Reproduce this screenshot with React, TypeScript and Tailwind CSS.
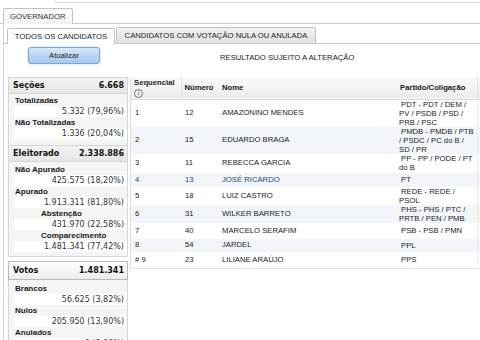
import React from 'react';

type Stat = { label: string; value: string; indent?: boolean };

const secoes: Stat[] = [
    { label: 'Totalizadas', value: '5.332 (79,96%)' },
    { label: 'Não Totalizadas', value: '1.336 (20,04%)' },
];

const eleitorado: Stat[] = [
    { label: 'Não Apurado', value: '425.575 (18,20%)' },
    { label: 'Apurado', value: '1.913.311 (81,80%)' },
    { label: 'Abstenção', value: '431.970 (22,58%)', indent: true },
    { label: 'Comparecimento', value: '1.481.341 (77,42%)', indent: true },
];

const votos: Stat[] = [
    { label: 'Brancos', value: '56.625 (3,82%)' },
    { label: 'Nulos', value: '205.950 (13,90%)' },
    { label: 'Anulados', value: '0 (0,00%)' },
];

const candidatos = [
    { seq: '1', num: '12', nome: 'AMAZONINO MENDES', partido: ['PDT - PDT / DEM /', 'PV / PSDB / PSD /', 'PRB / PSC'], h: 'h-[25px]' },
    { seq: '2', num: '15', nome: 'EDUARDO BRAGA', partido: ['PMDB - PMDB / PTB', '/ PSDC / PC do B /', 'SD / PR'], h: 'h-[27px]' },
    { seq: '3', num: '11', nome: 'REBECCA GARCIA', partido: ['PP - PP / PODE / PT', 'do B'], h: 'h-[19px]' },
    { seq: '4', num: '13', nome: 'JOSÉ RICARDO', partido: ['PT'], h: 'h-[14px]', blue: true },
    { seq: '5', num: '18', nome: 'LUIZ CASTRO', partido: ['REDE - REDE /', 'PSOL'], h: 'h-[18px]' },
    { seq: '6', num: '31', nome: 'WILKER BARRETO', partido: ['PHS - PHS / PTC /', 'PRTB / PEN / PMB'], h: 'h-[18px]' },
    { seq: '7', num: '40', nome: 'MARCELO SERAFIM', partido: ['PSB - PSB / PMN'], h: 'h-[16px]' },
    { seq: '8', num: '54', nome: 'JARDEL', partido: ['PPL'], h: 'h-[13px]' },
    { seq: '# 9', num: '23', nome: 'LILIANE ARAÚJO', partido: ['PPS'], h: 'h-[17px]' },
];

const StatRows = ({ items }: { items: Stat[] }) => (
    <div>
        {items.map((s) => (
            <div key={s.label}>
                <div
                    className={`h-[11px] leading-[11px] text-[8px] font-bold text-[#1a1a1a] ${s.indent ? 'pl-[32px]' : 'pl-[6px]'}`}
                >
                    {s.label}
                </div>
                <div className="h-[11px] leading-[12px] ml-[5px] bg-white pr-[3px] text-right text-[8px] text-[#333] font-['DejaVu_Sans',sans-serif]">
                    {s.value}
                </div>
            </div>
        ))}
    </div>
);

const PanelHeader = ({ label, value }: { label: string; value: string }) => (
    <div className="h-[16px] flex items-center justify-between pl-[4px] pr-[3px] bg-gradient-to-b from-[#f4f4f4] to-[#e6e6e6] border-b border-[#d6d6d6] text-[8px] font-bold text-[#111] font-['DejaVu_Sans',sans-serif]">
        <span>{label}</span>
        <span>{value}</span>
    </div>
);

export default function App() {
    return (
        <div className="w-[480px] h-[340px] overflow-hidden bg-white text-[#222] font-['Liberation_Sans',Arial,sans-serif]">
            {/* top frame edge */}
            <div className="ml-[55px] h-[3px] border-l border-b border-[#dcdcdc]" />

            {/* cargo tab */}
            <div className="h-[21px] flex items-end pl-[3px] border-b border-[#c9c9c9]">
                <div className="h-[16px] -mb-px px-[6px] flex items-center bg-gradient-to-b from-white to-[#f3f3f3] border border-b-0 border-[#c4c4c4] rounded-t-[3px] text-[7.7px] text-[#333]">
                    GOVERNADOR
                </div>
            </div>

            <div className="ml-[3px] border-l border-[#d2d2d2] h-full">
                {/* candidate tabs */}
                <div className="h-[20px] flex items-end pl-[3px] border-b border-[#c9c9c9]">
                    <div className="h-[16px] w-[108px] -mb-px flex items-center justify-center bg-white border border-b-0 border-[#c4c4c4] rounded-t-[2px] text-[7.7px] text-[#222]">
                        TODOS OS CANDIDATOS
                    </div>
                    <div className="h-[16px] w-[200px] ml-px flex items-center justify-center bg-gradient-to-b from-[#f2f2f2] to-[#e2e2e2] border border-b-0 border-[#c4c4c4] rounded-t-[2px] text-[7.7px] text-[#222]">
                        CANDIDATOS COM VOTAÇÃO NULA OU ANULADA
                    </div>
                </div>

                {/* actions */}
                <div className="h-[33px] flex items-start pt-[3px]">
                    <button className="ml-[24px] w-[72px] h-[17px] rounded-[3px] border border-[#7ea6d3] bg-gradient-to-b from-[#dbeafb] via-[#bcd6f2] to-[#a6c8ee] text-[7.7px] text-[#222] shadow-[0_0_2px_rgba(90,150,220,0.6)]">
                        Atualizar
                    </button>
                    <div className="ml-[120px] mt-[5px] text-[7.7px] text-[#222]">RESULTADO SUJEITO A ALTERAÇÃO</div>
                </div>

                <div className="flex items-start">
                    {/* resumo */}
                    <div className="ml-[4px] w-[120px] shrink-0">
                        <div className="border border-[#d6d6d6] bg-[#f5f5f5] pb-[4px]">
                            <PanelHeader label="Seções" value="6.668" />
                            <div className="pt-px">
                                <StatRows items={secoes} />
                            </div>
                            <div className="h-[6px]" />
                            <div className="border-t border-[#d6d6d6]">
                                <PanelHeader label="Eleitorado" value="2.338.886" />
                            </div>
                            <div className="pt-[2px]">
                                <StatRows items={eleitorado} />
                            </div>
                        </div>
                        <div className="mt-[4px] border border-[#b9b9b9] bg-[#f5f5f5]">
                            <div className="h-[17px] flex items-center justify-between pl-[4px] pr-[3px] bg-gradient-to-b from-white to-[#ededed] text-[8px] font-bold text-[#111] font-['DejaVu_Sans',sans-serif]">
                                <span>Votos</span>
                                <span>1.481.341</span>
                            </div>
                        </div>
                        <div className="border-x border-[#d6d6d6] bg-[#f5f5f5] pt-[3px]">
                            <StatRows items={votos} />
                        </div>
                    </div>

                    {/* candidatos */}
                    <div className="ml-[2px] flex-1 border-l border-[#dcdcdc]">
                        <table className="w-full table-fixed border-collapse text-[7.7px]">
                            <colgroup>
                                <col className="w-[50px]" />
                                <col className="w-[38px]" />
                                <col className="w-[178px]" />
                                <col className="w-[80px]" />
                                <col />
                            </colgroup>
                            <thead>
                                <tr className="h-[22px] bg-gradient-to-b from-[#fafafa] to-[#ececec] border-b border-[#d8d8d8] font-bold text-[#222]">
                                    <th className="pl-[3px] text-left align-top pt-[1px] border-r border-[#e2e2e2] font-bold">
                                        <div className="leading-[9px]">Sequencial</div>
                                        <div className="mt-[2px] w-[9px] h-[9px] rounded-full border border-[#777] flex items-center justify-center text-[6.5px] leading-none font-normal text-[#555] font-['DejaVu_Serif',serif]">
                                            i
                                        </div>
                                    </th>
                                    <th className="pl-[3px] text-left align-middle pt-[1px] font-bold">Número</th>
                                    <th className="pl-[3px] text-left align-middle pt-[1px] font-bold">Nome</th>
                                    <th className="pl-[3px] text-left align-middle pt-[1px] border-r border-[#e2e2e2] font-bold">Partido/Coligação</th>
                                    <th />
                                </tr>
                            </thead>
                            <tbody>
                                {candidatos.map((c, i) => (
                                    <tr
                                        key={c.seq}
                                        className={`${c.h} ${i % 2 === 1 ? 'bg-[#f3f5f9]' : 'bg-white'} ${c.blue ? 'text-[#27468a]' : 'text-[#222]'} ${i === candidatos.length - 1 ? 'border-b border-[#e4e4e4]' : ''}`}
                                    >
                                        <td className="pl-[4px] align-middle">{c.seq}</td>
                                        <td className="pl-[4px] align-middle">{c.num}</td>
                                        <td className="pl-[3px] align-middle">{c.nome}</td>
                                        <td className="pl-[2px] align-middle leading-[9px] border-r border-[#ececec] text-[#222]">
                                            {c.partido.map((p, j) => (
                                                <div key={p} className={j === 0 ? 'pl-[2px]' : ''}>
                                                    {p}
                                                </div>
                                            ))}
                                        </td>
                                        <td />
                                    </tr>
                                ))}
                            </tbody>
                        </table>
                    </div>
                </div>
            </div>
        </div>
    );
}
